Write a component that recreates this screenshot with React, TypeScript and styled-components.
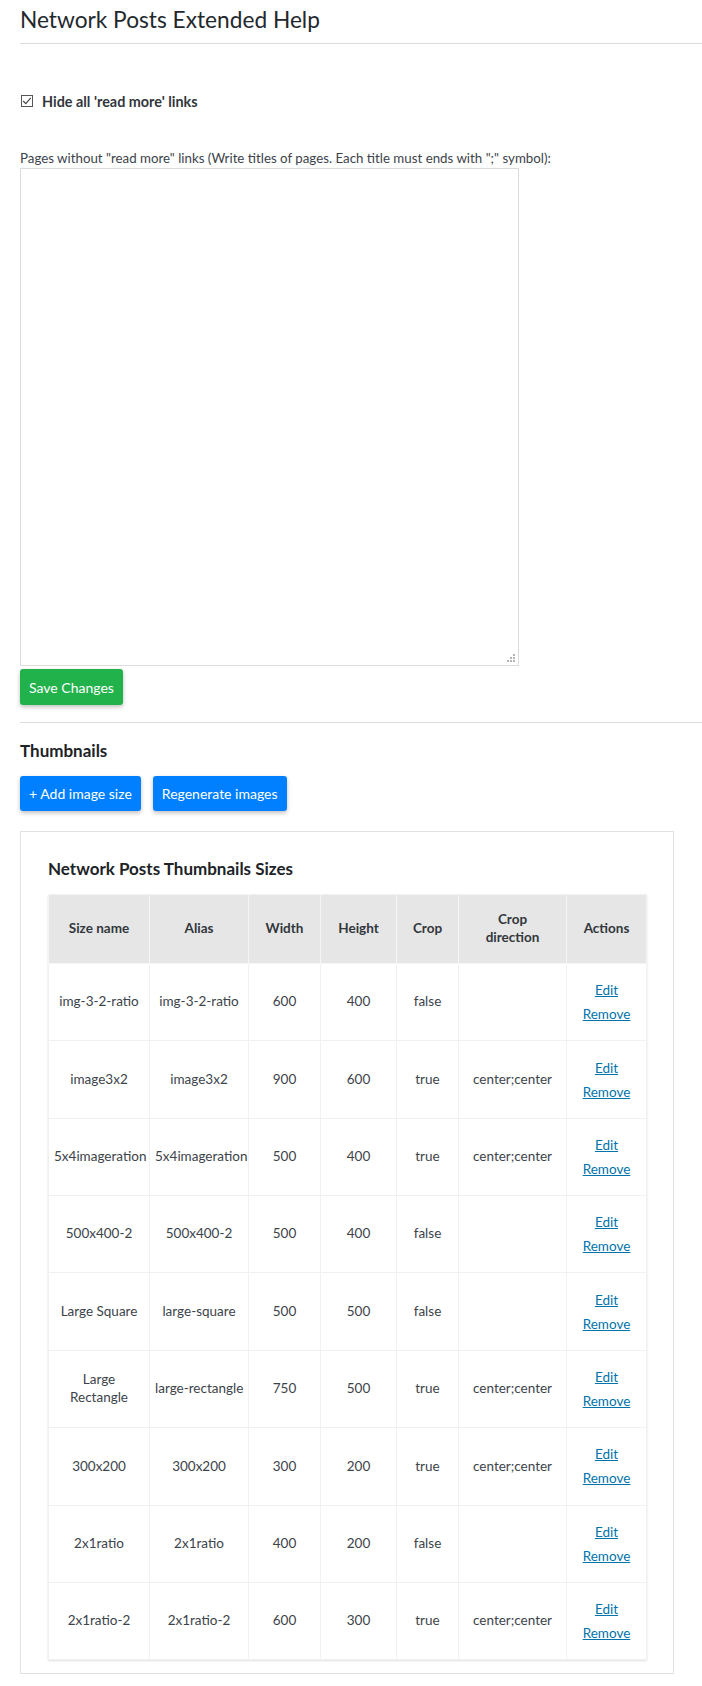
import React from "react";
import styled, { createGlobalStyle } from "styled-components";

const Global = createGlobalStyle`
  html, body { margin: 0; padding: 0; background: #fff; }
  body { font-family: "Lato", "Open Sans", sans-serif; color: #3c434a; font-size: 13px; }
  * { box-sizing: border-box; }
`;

const Wrap = styled.div`
  padding: 5px 0 12px 20px;
`;

const Title = styled.h1`
  margin: 0;
  font-size: 22.7px;
  font-weight: 400;
  line-height: 30px;
  color: #23282d;
`;

const Rule = styled.hr<{ $mt: number; $mb: number }>`
  border: 0;
  border-top: 1px solid #dcdcde;
  margin: ${(p) => p.$mt}px 0 ${(p) => p.$mb}px;
`;

const CheckRow = styled.label`
  display: flex;
  align-items: center;
  gap: 9px;
  font-weight: 700;
  font-size: 14.4px;
  color: #32373c;
  height: 20px;
  padding-left: 1px;
`;

const Box = styled.span`
  width: 12px;
  height: 12px;
  border: 1px solid #555;
  display: inline-flex;
  align-items: center;
  justify-content: center;
  margin-bottom: 1px;
`;

const Para = styled.p`
  margin: 38px 0 0;
  line-height: 18px;
  font-size: 13.3px;
  color: #3c434a;
`;

const AreaWrap = styled.div`
  position: relative;
  width: 499px;
  height: 498px;
  margin-top: 1px;
`;

const Area = styled.textarea`
  width: 100%;
  height: 100%;
  border: 1px solid #dcdcde;
  resize: none;
  display: block;
  outline: none;
`;

const Grip = styled.span`
  position: absolute;
  right: 4px;
  bottom: 4px;
  width: 8px;
  height: 8px;
  display: flex;
`;

const Btn = styled.button<{ $green?: boolean }>`
  font-family: inherit;
  font-size: 14px;
  color: #fff;
  border: 0;
  border-radius: 3px;
  height: ${(p) => (p.$green ? 36 : 35)}px;
  padding: 0 9px;
  background: ${(p) => (p.$green ? "#21b24b" : "#0080ff")};
  box-shadow: 0 2px 4px rgba(0, 0, 0, 0.25);
  cursor: pointer;
`;

const SaveRow = styled.div`
  margin-top: 3px;
`;

const H2 = styled.h2`
  margin: 0;
  font-size: 17px;
  font-weight: 700;
  line-height: 24px;
  color: #1d2327;
`;

const BtnRow = styled.div`
  display: flex;
  gap: 12px;
  margin-top: 13px;
`;

const Panel = styled.div`
  margin-top: 20px;
  width: 654px;
  border: 1px solid #e2e2e2;
  padding: 26px 27px 13px;
`;

const H3 = styled.h3`
  margin: 0 0 14px;
  font-size: 17px;
  font-weight: 700;
  line-height: 22px;
  color: #1d2327;
`;

const Table = styled.table`
  border-collapse: collapse;
  width: 598px;
  table-layout: fixed;
  box-shadow: 0 1px 2px rgba(0, 0, 0, 0.12);
`;

const Th = styled.th`
  background: #e6e6e6;
  border: 1.5px solid #f4f4f4;
  font-weight: 700;
  font-size: 13.5px;
  line-height: 17.6px;
  padding: 16.4px 12px;
  text-align: center;
  color: #32373c;
`;

const Td = styled.td<{ $nowrap?: boolean }>`
  border: 1px solid #f1f1f1;
  font-size: 13.5px;
  line-height: 17.6px;
  padding: 14.2px 5px;
  text-align: center;
  color: #3c434a;
  white-space: ${(p) => (p.$nowrap ? "nowrap" : "normal")};
`;

const Link = styled.a`
  display: block;
  color: #0073aa;
  text-decoration: underline;
  line-height: 24px;
  cursor: pointer;
`;

const cols = [101, 99, 72, 76, 62, 108, 80];

const rows: [string, string, string, string, string, string][] = [
  ["img-3-2-ratio", "img-3-2-ratio", "600", "400", "false", ""],
  ["image3x2", "image3x2", "900", "600", "true", "center;center"],
  ["5x4imageration", "5x4imageration", "500", "400", "true", "center;center"],
  ["500x400-2", "500x400-2", "500", "400", "false", ""],
  ["Large Square", "large-square", "500", "500", "false", ""],
  ["Large Rectangle", "large-rectangle", "750", "500", "true", "center;center"],
  ["300x200", "300x200", "300", "200", "true", "center;center"],
  ["2x1ratio", "2x1ratio", "400", "200", "false", ""],
  ["2x1ratio-2", "2x1ratio-2", "600", "300", "true", "center;center"],
];

export default function App() {
  return (
    <Wrap>
      <Global />
      <Title>Network Posts Extended Help</Title>
      <Rule $mt={8} $mb={47} />
      <CheckRow>
        <Box>
          <svg width="10" height="10" viewBox="0 0 10 10">
            <path d="M1.2 5 L3.8 7.6 L8.8 1.8" fill="none" stroke="#444" strokeWidth="1.1" />
          </svg>
        </Box>
        Hide all 'read more' links
      </CheckRow>
      <Para>Pages without "read more" links (Write titles of pages. Each title must ends with ";" symbol):</Para>
      <AreaWrap>
        <Area />
        <Grip>
          <svg width="8" height="8" viewBox="0 0 8 8">
            <g fill="#b5b5b5">
              <rect x="6" y="0" width="2" height="2" />
              <rect x="3" y="3" width="2" height="2" />
              <rect x="6" y="3" width="2" height="2" />
              <rect x="0" y="6" width="2" height="2" />
              <rect x="3" y="6" width="2" height="2" />
              <rect x="6" y="6" width="2" height="2" />
            </g>
          </svg>
        </Grip>
      </AreaWrap>
      <SaveRow>
        <Btn $green>Save Changes</Btn>
      </SaveRow>
      <Rule $mt={17} $mb={16} />
      <H2>Thumbnails</H2>
      <BtnRow>
        <Btn>+ Add image size</Btn>
        <Btn>Regenerate images</Btn>
      </BtnRow>
      <Panel>
        <H3>Network Posts Thumbnails Sizes</H3>
        <Table>
          <colgroup>
            {cols.map((w, i) => (
              <col key={i} style={{ width: w }} />
            ))}
          </colgroup>
          <thead>
            <tr>
              <Th>Size name</Th>
              <Th>Alias</Th>
              <Th>Width</Th>
              <Th>Height</Th>
              <Th>Crop</Th>
              <Th>Crop direction</Th>
              <Th>Actions</Th>
            </tr>
          </thead>
          <tbody>
            {rows.map((r, i) => (
              <tr key={i}>
                {r.map((c, j) => (
                  <Td key={j} $nowrap={j === 1}>
                    {c}
                  </Td>
                ))}
                <Td>
                  <Link>Edit</Link>
                  <Link>Remove</Link>
                </Td>
              </tr>
            ))}
          </tbody>
        </Table>
      </Panel>
    </Wrap>
  );
}
